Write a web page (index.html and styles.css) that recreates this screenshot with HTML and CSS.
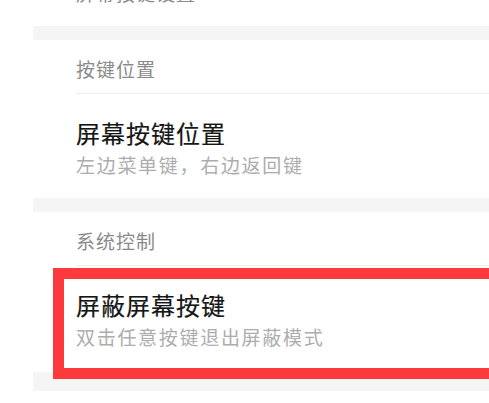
FILE: index.html
```html
<!DOCTYPE html>
<html lang="zh-CN">
<head>
<meta charset="utf-8">
<link rel="stylesheet" href="styles.css">
</head>
<body>
<div class="list">
  <div class="top-item"><span class="cut-text">屏幕按键设置</span></div>
  <div class="band"></div>
  <div class="section">按键位置</div>
  <div class="item">
    <div class="title">屏幕按键位置</div>
    <div class="sub">左边菜单键，右边返回键</div>
  </div>
  <div class="band"></div>
  <div class="section">系统控制</div>
  <div class="item item-marked">
    <div class="title">屏蔽屏幕按键</div>
    <div class="sub">双击任意按键退出屏蔽模式</div>
    <div class="highlight"></div>
  </div>
  <div class="band band-bottom"></div>
</div>
</body>
</html>
```

FILE: styles.css
```css
html, body {
  margin: 0;
  padding: 0;
  background: #ffffff;
  overflow: hidden;
}
body {
  font-family: "Noto Sans CJK SC", "Noto Sans", sans-serif;
}
.list {
  margin-left: 33px;
}
.top-item {
  margin-top: -17px;
  height: 43px;
  padding-left: 43px;
  box-sizing: border-box;
}
.cut-text {
  display: block;
  font-size: 19px;
  line-height: 20px;
  letter-spacing: 1px;
  color: #8a8a8a;
}
.band {
  height: 14px;
  background: #f5f5f5;
}
.band-bottom {
  height: 19px;
}
.section {
  margin-left: 43px;
  height: 54px;
  box-sizing: border-box;
  padding-top: 3px;
  border-bottom: 1px solid #eeeeee;
  display: flex;
  align-items: center;
  font-size: 19px;
  letter-spacing: 1px;
  color: #8a8a8a;
}
.item {
  position: relative;
  height: 104px;
  box-sizing: border-box;
  padding-left: 43px;
  padding-top: 23px;
}
.item-marked {
  height: 106px;
}
.title {
  font-size: 24px;
  line-height: 32px;
  letter-spacing: 1px;
  font-weight: 400;
  color: #161616;
  -webkit-text-stroke: 0.2px #161616;
}
.sub {
  font-size: 19px;
  line-height: 32px;
  letter-spacing: 1.7px;
  color: #adadad;
}
.highlight {
  position: absolute;
  top: 2px;
  left: 20px;
  right: -30px;
  height: 111px;
  box-sizing: border-box;
  border: 11px solid #fc3a3c;
}
```
